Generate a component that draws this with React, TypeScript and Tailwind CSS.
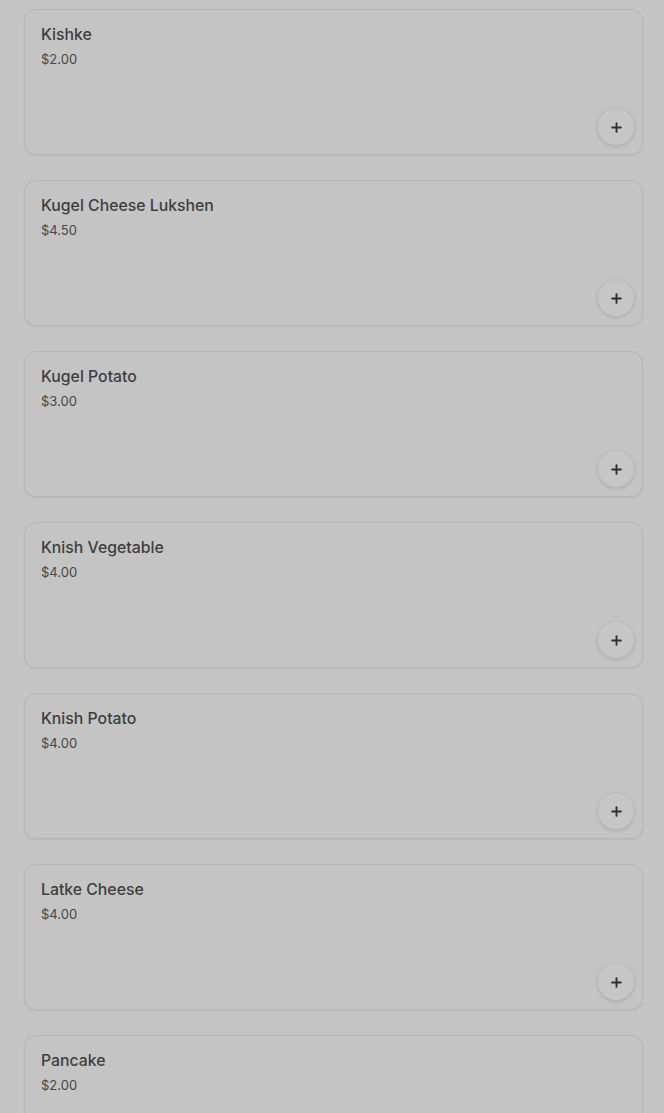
import { Plus } from "lucide-react";

const items = [
  { name: "Kishke", price: "$2.00" },
  { name: "Kugel Cheese Lukshen", price: "$4.50" },
  { name: "Kugel Potato", price: "$3.00" },
  { name: "Knish Vegetable", price: "$4.00" },
  { name: "Knish Potato", price: "$4.00" },
  { name: "Latke Cheese", price: "$4.00" },
  { name: "Pancake", price: "$2.00" },
];

export default function App() {
  return (
    <div
      className="min-h-screen bg-[#c4c4c4] pt-[9px] pr-[21px] pl-6"
      style={{ fontFamily: "Inter, 'Noto Sans', sans-serif" }}
    >
      <div className="flex flex-col gap-[25px]">
        {items.map((item) => (
          <div
            key={item.name}
            className="relative h-[146px] rounded-xl border border-[#b6b6b6] bg-[#c4c4c4] px-4 pt-[13px] shadow-[0_1px_2px_rgba(0,0,0,0.06)]"
          >
            <div className="text-[15.8px] leading-6 font-medium text-[#3e3e3e]">{item.name}</div>
            <div className="mt-[2px] text-[13px] leading-5 text-[#474747]">{item.price}</div>
            <button className="absolute right-2 bottom-[9px] flex h-9 w-9 items-center justify-center rounded-full bg-[#c6c6c6] shadow-[0_1px_4px_rgba(0,0,0,0.15)]">
              <Plus size={15} strokeWidth={3} className="text-[#2f2f2f]" />
            </button>
          </div>
        ))}
      </div>
    </div>
  );
}
